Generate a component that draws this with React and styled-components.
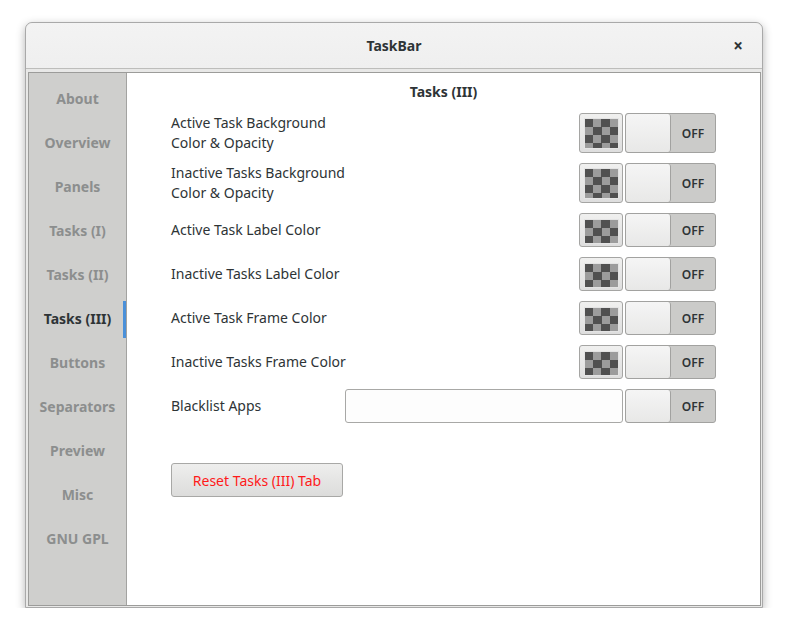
import React from "react";
import styled, { createGlobalStyle } from "styled-components";

const Global = createGlobalStyle`
  html, body { margin: 0; padding: 0; background: #ffffff; }
  body { font-family: "Noto Sans", "Open Sans", sans-serif; }
`;

const Page = styled.div`
  padding: 22px 0 0 25px;
`;

const Window = styled.div`
  width: 736px;
  height: 584px;
  border: 1px solid #a9a9a9;
  border-radius: 7px 7px 0 0;
  background: #e8e8e7;
  box-shadow: 0 3px 10px rgba(0, 0, 0, 0.3);
  display: flex;
  flex-direction: column;
`;

const TitleBar = styled.div`
  height: 45px;
  flex: none;
  background: linear-gradient(#f3f3f3, #efefef);
  border-bottom: 1px solid #bdbdbb;
  border-radius: 7px 7px 0 0;
  display: grid;
  grid-template-columns: 60px 1fr 60px;
  align-items: center;
`;

const Title = styled.div`
  grid-column: 2;
  text-align: center;
  font-size: 14px;
  font-weight: 700;
  color: #2e3436;
`;

const Close = styled.div`
  justify-self: end;
  margin-right: 19px;
  font-size: 17px;
  font-weight: 700;
  color: #2e3436;
  line-height: 1;
`;

const Body = styled.div`
  flex: 1;
  min-height: 0;
  padding: 3px 1px 1px 2px;
  display: flex;
`;

const Frame = styled.div`
  flex: 1;
  min-width: 0;
  border: 1px solid #9c9c9a;
  display: flex;
  background: #ffffff;
`;

const Sidebar = styled.div`
  width: 97px;
  flex: none;
  background: #cfcfcd;
  border-right: 1px solid #a3a3a1;
  padding-top: 3px;
  display: flex;
  flex-direction: column;
`;

const NavItem = styled.div`
  height: 44px;
  display: flex;
  align-items: center;
  justify-content: center;
  font-size: 14px;
  font-weight: 700;
  color: ${(p) => (p.$active ? "#2e3436" : "#8c8e8e")};
  position: relative;
  &::after {
    content: "";
    display: ${(p) => (p.$active ? "block" : "none")};
    position: absolute;
    right: 0;
    top: 5px;
    bottom: 2px;
    width: 3px;
    background: #4a90d9;
  }
`;

const Content = styled.div`
  flex: 1;
  min-width: 0;
  padding: 9px 44px 0 44px;
  display: flex;
  flex-direction: column;
`;

const Heading = styled.div`
  text-align: center;
  font-size: 14px;
  font-weight: 700;
  color: #2e3436;
  line-height: 20px;
  margin-bottom: 11px;
`;

const Rows = styled.div`
  display: flex;
  flex-direction: column;
  gap: 10px;
`;

const Row = styled.div`
  display: flex;
  align-items: stretch;
  height: ${(p) => (p.$tall ? 40 : 34)}px;
  gap: 2px;
`;

const Label = styled.div`
  flex: 1;
  min-width: 0;
  display: flex;
  align-items: center;
  font-size: 14px;
  line-height: 20px;
  color: #2e3436;
  white-space: pre-line;
`;

const ColorButton = styled.div`
  width: 44px;
  box-sizing: border-box;
  border: 1px solid #a5a5a3;
  border-radius: 3px;
  background: linear-gradient(#f0f0ef, #dedede);
  padding: ${(p) => (p.$tall ? "4px 3px 3px 4px" : "5px 3px 2px 4px")};
  display: flex;
`;

const Checker = styled.div`
  flex: 1;
  border: 1px solid #e4e4e4;
  background-color: #9c9c9c;
  background-image: conic-gradient(
    #505050 25%, #9c9c9c 0 50%, #505050 0 75%, #9c9c9c 0
  );
  background-size: 17px 16px;
  background-position: 8px 0;
`;

const Switch = styled.div`
  width: 91px;
  flex: none;
  box-sizing: border-box;
  border: 1px solid #a2a2a0;
  border-radius: 3px;
  background: #cbcbc9;
  display: flex;
  overflow: hidden;
`;

const Knob = styled.div`
  width: 45px;
  box-sizing: border-box;
  border-right: 1px solid #a2a2a0;
  border-radius: 3px;
  background: linear-gradient(#f5f5f5, #e8e8e7);
`;

const SwitchText = styled.div`
  flex: 1;
  display: flex;
  align-items: center;
  justify-content: center;
  font-size: 12px;
  font-weight: 600;
  color: #2e3436;
`;

const Entry = styled.div`
  width: 278px;
  flex: none;
  box-sizing: border-box;
  border: 1px solid #a8a8a6;
  border-radius: 3px;
  background: #fdfdfd;
`;

const ResetButton = styled.div`
  margin-top: 40px;
  width: 172px;
  height: 34px;
  box-sizing: border-box;
  border: 1px solid #a8a8a6;
  border-radius: 3px;
  background: linear-gradient(#eeeeed, #dcdcdb);
  display: flex;
  align-items: center;
  justify-content: center;
  font-size: 14px;
  color: #ff1a1a;
`;

const nav = [
  "About",
  "Overview",
  "Panels",
  "Tasks (I)",
  "Tasks (II)",
  "Tasks (III)",
  "Buttons",
  "Separators",
  "Preview",
  "Misc",
  "GNU GPL",
];

const rows = [
  { label: "Active Task Background\nColor & Opacity", tall: true },
  { label: "Inactive Tasks Background\nColor & Opacity", tall: true },
  { label: "Active Task Label Color" },
  { label: "Inactive Tasks Label Color" },
  { label: "Active Task Frame Color" },
  { label: "Inactive Tasks Frame Color" },
];

const Toggle = () => (
  <Switch>
    <Knob />
    <SwitchText>OFF</SwitchText>
  </Switch>
);

export default function App() {
  return (
    <>
      <Global />
      <Page>
        <Window>
          <TitleBar>
            <Title>TaskBar</Title>
            <Close>×</Close>
          </TitleBar>
          <Body>
            <Frame>
              <Sidebar>
                {nav.map((n) => (
                  <NavItem key={n} $active={n === "Tasks (III)"}>
                    {n}
                  </NavItem>
                ))}
              </Sidebar>
              <Content>
                <Heading>Tasks (III)</Heading>
                <Rows>
                  {rows.map((r) => (
                    <Row key={r.label} $tall={r.tall}>
                      <Label>{r.label}</Label>
                      <ColorButton $tall={r.tall}>
                        <Checker />
                      </ColorButton>
                      <Toggle />
                    </Row>
                  ))}
                  <Row>
                    <Label>Blacklist Apps</Label>
                    <Entry />
                    <Toggle />
                  </Row>
                </Rows>
                <ResetButton>Reset Tasks (III) Tab</ResetButton>
              </Content>
            </Frame>
          </Body>
        </Window>
      </Page>
    </>
  );
}
